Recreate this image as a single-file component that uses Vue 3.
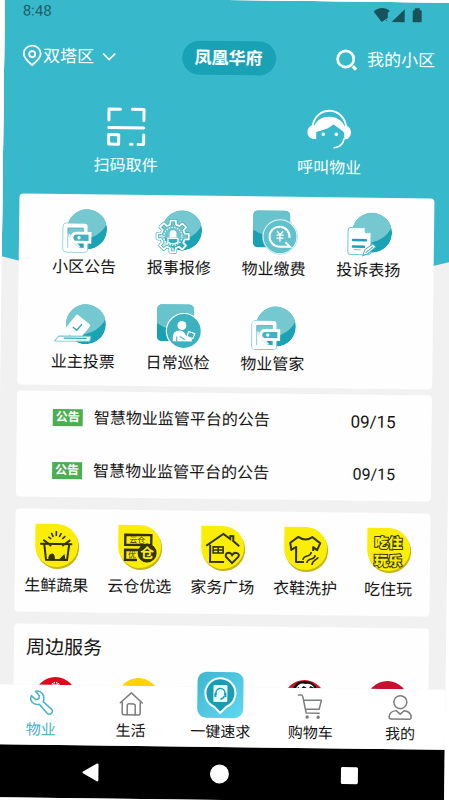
<script setup>
import { ref } from 'vue'

const activeTab = ref('property')

const services = [
  { icon: 'wallet', label: '小区公告' },
  { icon: 'repair', label: '报事报修' },
  { icon: 'fee', label: '物业缴费' },
  { icon: 'feedback', label: '投诉表扬' },
  { icon: 'vote', label: '业主投票' },
  { icon: 'patrol', label: '日常巡检' },
  { icon: 'wallet', label: '物业管家' },
]

const notices = [
  { id: 1, title: '智慧物业监管平台的公告', date: '09/15' },
  { id: 2, title: '智慧物业监管平台的公告', date: '09/15' },
]

const shops = [
  { icon: 'fresh', label: '生鲜蔬果' },
  { icon: 'store', label: '云仓优选' },
  { icon: 'home', label: '家务广场' },
  { icon: 'wash', label: '衣鞋洗护' },
  { icon: 'fun', label: '吃住玩' },
]

const nearby = ['#dd0a1c', '#ffd400', '#38b9cb', '#c8142c', '#c8102e']

const tabs = [
  { id: 'property', label: '物业' },
  { id: 'life', label: '生活' },
  { id: 'call', label: '一键速求' },
  { id: 'cart', label: '购物车' },
  { id: 'mine', label: '我的' },
]

// Outline of an eight-toothed gear around (cx, cy)
function gearPoints(cx, cy, inner, outer) {
  const points = []
  for (let i = 0; i < 8; i++) {
    const mid = (i * Math.PI) / 4
    const corners = [[-0.24, inner], [-0.17, outer], [0.17, outer], [0.24, inner]]
    for (const [offset, r] of corners) {
      points.push(`${(cx + r * Math.sin(mid + offset)).toFixed(1)},${(cy - r * Math.cos(mid + offset)).toFixed(1)}`)
    }
  }
  return points.join(' ')
}

const gear = gearPoints(17, 27, 12, 16)
</script>

<template>
  <div class="phone">
    <svg class="defs" width="0" height="0" aria-hidden="true">
      <defs>
        <clipPath id="ball"><circle cx="26" cy="21" r="20" /></clipPath>
        <clipPath id="tile"><rect x="2" y="0" width="37" height="37" rx="5" /></clipPath>
        <linearGradient id="sos" x1="0" y1="0" x2="1" y2="1">
          <stop offset="0" stop-color="#3fb6cf" />
          <stop offset="1" stop-color="#5fd8f3" />
        </linearGradient>
      </defs>
    </svg>

    <main class="content">
      <header class="hero">
        <div class="status">
          <span>8:48</span>
          <svg class="status-icons" viewBox="0 0 50 16" fill="#17535d">
            <path d="M0 5C4 0 12 0 16 4L14 6V11L8 15Z" />
            <path d="M13 7V11M13 13V14" stroke="#17535d" stroke-width="1" />
            <path d="M18 15L31 2V15Z" />
            <path d="M39 4Q39 3 40 3H41V1H46V3H47Q48 3 48 4V14Q48 15 47 15H40Q39 15 39 14Z" />
          </svg>
        </div>

        <div class="topbar">
          <button class="area" type="button">
            <svg class="pin" viewBox="0 0 20 22" fill="none" stroke="#fff" stroke-width="1.8">
              <path d="M10 20.500C6 17 1.500 13.500 1.500 9A8.500 8 0 0 1 18.500 9C18.500 13.500 14 17 10 20.500Z" />
              <circle cx="10" cy="9.500" r="3" />
            </svg>
            双塔区
            <svg class="chevron" viewBox="0 0 14 8" fill="none" stroke="#fff" stroke-width="1.6">
              <path d="M1 1L7 7L13 1" />
            </svg>
          </button>
          <button class="estate" type="button">凤凰华府</button>
          <button class="mine" type="button">
            <svg class="search" viewBox="0 0 22 22" fill="none" stroke="#fff" stroke-width="2.800">
              <circle cx="10" cy="10" r="8.500" />
              <path d="M17.500 17.500L21 21" stroke-width="3.400" />
            </svg>
            我的小区
          </button>
        </div>

        <nav class="quick">
          <a class="quick-item" href="#scan">
            <svg class="quick-icon" viewBox="0 0 44 40" fill="none" stroke="#fff" stroke-width="3" stroke-linecap="round" stroke-linejoin="round">
              <path d="M4.500 13.500V2.500H16M28 2.500H39.500V13.500M4.500 21H39.500M39.500 28V37.500H34" />
              <rect x="4.500" y="28" width="10" height="9.500" />
              <path d="M26.500 37.500H28" />
            </svg>
            扫码取件
          </a>
          <a class="quick-item" href="#call">
            <svg class="quick-icon" viewBox="0 0 44 40" fill="#fff">
              <path d="M5 18C8 -4 36 -4 39 18" fill="none" stroke="#fff" stroke-width="1.800" />
              <path d="M6 21C7 3 37 3 38 21V25C36 21 31 19 26 15C21 20 15 21 9 23V30H6Z" />
              <path d="M7 16C-2 16-2 30 7 30ZM37 16C46 16 46 30 37 30Z" />
              <circle cx="16" cy="25" r="1.800" />
              <circle cx="29" cy="25" r="1.800" />
              <path d="M37 29C36 35 32 38 27 38.500" fill="none" stroke="#fff" stroke-width="1.600" stroke-linecap="round" />
            </svg>
            呼叫物业
          </a>
        </nav>
      </header>

      <section class="card services">
        <a v-for="item in services" :key="item.label" class="service" href="#service">
          <svg class="service-icon" viewBox="0 0 46 44">
            <g v-if="item.icon === 'fee' || item.icon === 'patrol'" clip-path="url(#tile)">
              <rect x="2" width="37" height="37" fill="#1b9fb3" />
              <ellipse cx="25" cy="4" rx="31" ry="22" fill="#68c3cd" />
            </g>
            <g v-else clip-path="url(#ball)">
              <circle cx="26" cy="21" r="20" fill="#1aa2b5" />
              <circle cx="21" cy="4" r="27" fill="#75c8d0" />
            </g>

            <g v-if="item.icon === 'wallet'" fill="none">
              <rect x="2" y="15" width="25" height="29" rx="4" stroke="#7accd4" stroke-width="1" />
              <rect x="4.500" y="17.500" width="20" height="24" rx="1" stroke="#fff" stroke-width="4" />
              <path d="M7 39.500V20H22.500V24M22.500 35V39.500Z" stroke="#58bbc7" stroke-width=".8" />
              <path d="M7.500 25L20 39H7.500Z" fill="#fff" opacity=".85" />
              <path d="M29 25H16Q11 25 11 29.500T16 34H29Z" fill="#42b0bf" stroke="#fff" stroke-width="2.800" />
              <circle cx="18" cy="29.500" r="1.700" fill="#fff" />
            </g>

            <g v-else-if="item.icon === 'repair'" fill="none" stroke-linejoin="round">
              <polygon :points="gear" fill="#62bfc9" fill-opacity=".4" stroke="#35aaba" stroke-width="3" />
              <polygon :points="gear" stroke="#fff" stroke-width="1.800" />
              <circle cx="17" cy="27" r="9" stroke="#fff" stroke-width="1.200" stroke-dasharray="1.500 1.200" />
              <path d="M13.500 25Q13.500 21 17 21T20.500 25V28H13.500Z" fill="#fff" />
              <path d="M12 29H22V33Q17 36 12 33Z" stroke="#fff" stroke-width="1.400" fill="#35aaba" />
            </g>

            <g v-else-if="item.icon === 'fee'" fill="none">
              <circle cx="29" cy="26" r="17" fill="#62c1cb" stroke="#fff" stroke-width="1" />
              <circle cx="29" cy="26" r="17.500" stroke="#8ad2d9" stroke-width=".6" />
              <path d="M38.500 27A10 10 0 1 0 29 36H39L34.500 31.500" stroke="#fff" stroke-width="2" />
              <path d="M26 20.500L29 24L32 20.500M29 24V31M25.500 24.500H32.500M25.500 27.500H32.500" stroke="#fff" stroke-width="1.300" />
            </g>

            <g v-else-if="item.icon === 'feedback'">
              <path d="M5 16H18L25 22V40Q25 43 22 43H5Q2 43 2 40V19Q2 16 5 16Z" fill="#fff" stroke="#72c8d1" />
              <path d="M18 16V20Q18 22 20 22H25" fill="#7bcbd3" stroke="#fff" />
              <path d="M7 28.500H20M7 35H18" stroke="#1aa2b5" stroke-width="2.400" stroke-linecap="round" />
              <path d="M8 38H15" stroke="#72c8d1" />
              <path d="M17 44L19 38L27 32L30 35L22 42Z" fill="#fff" stroke="#49b4c1" />
              <path d="M20 41L27 35" stroke="#49b4c1" />
            </g>

            <g v-else-if="item.icon === 'vote'">
              <rect x="8.500" y="14" width="18" height="21" rx="2" transform="rotate(38 17.500 24.500)" fill="#fff" />
              <path d="M13 24L17 27L22 21" fill="none" stroke="#35aaba" stroke-width="1.400" />
              <path d="M-1 33H31L30 38H-5Z" fill="#fff" stroke="#72c8d1" stroke-linejoin="round" />
              <path d="M4 35H27" stroke="#35aaba" stroke-width="1.200" />
            </g>

            <g v-else>
              <circle cx="29" cy="26.500" r="17.500" fill="#3cb2c1" stroke="#fff" stroke-width="1.200" />
              <circle cx="27" cy="21" r="4.500" fill="#fff" />
              <path d="M18 37V33Q18 26 25 26Q29 26 31 31L37 34V37Z" fill="#fff" />
              <path d="M22 32V37M25 32L30 35" stroke="#3cb2c1" stroke-width="1" />
              <path d="M34 27L40 29L38 34L32 32Z" fill="none" stroke="#fff" stroke-width="1.200" />
            </g>
          </svg>
          {{ item.label }}
        </a>
      </section>

      <section class="card notices">
        <a v-for="notice in notices" :key="notice.id" class="notice" href="#notice">
          <span class="tag">公告</span>
          <span class="notice-title">{{ notice.title }}</span>
          <time class="date">{{ notice.date }}</time>
        </a>
      </section>

      <section class="card shops">
        <a v-for="shop in shops" :key="shop.label" class="shop" href="#shop">
          <svg class="shop-icon" viewBox="0 0 45 45">
            <path d="M2 2H23A21.500 21.500 0 1 1 2 24Z" fill="#c5b41c" />
            <path d="M1 0H22A21.500 21.500 0 1 1 1 22Z" fill="#fbee06" />

            <g v-if="shop.icon === 'fresh'" fill="none" stroke="#33310f" stroke-width="2">
              <path d="M10 20L12 36H33L35 20" />
              <path d="M6 20H38M9 16L17 22M36 16L28 22" />
              <path d="M14 13L17 15M17 9L19 13M22 7V12M27 9L25 13M31 12L28 15" stroke-width="1.600" />
              <path d="M15 36Q14 31 18 30Q21 31 20 36ZM25 36L30 31L31 36Z" fill="#33310f" stroke-width="1" />
            </g>

            <g v-else-if="shop.icon === 'store'">
              <path d="M8 10H34V20H8ZM22 25H8V35H20" fill="none" stroke="#33310f" stroke-width="2.400" />
              <text x="12" y="18" class="store-small">云仓</text>
              <text x="11" y="33" class="store-small">优</text>
              <circle cx="30" cy="28" r="9.500" fill="#33310f" />
              <text x="30" y="33" class="store-mark">仓</text>
            </g>

            <g v-else-if="shop.icon === 'home'" fill="none" stroke="#33310f" stroke-width="2">
              <path d="M6 20L23 8L30 13V10H33V15L39 20M10 19V36H24" />
              <path d="M13 21H23V27H13ZM18 21V27M13 24H23" stroke-width="1.600" />
              <path d="M32 37L26 31C24 27 30 25 32 29C34 25 41 27 38 31Z" />
            </g>

            <g v-else-if="shop.icon === 'wash'" fill="none" stroke="#33310f" stroke-width="2" stroke-linejoin="round">
              <path d="M21 35H13V20L8 23V22L7 16L15 10Q22 15 29 10L37 16L34 23L30 20V24" />
              <path d="M20 33Q20 30 24 29T28 25M24 36Q24 33 28 32T32 28M29 38Q29 35 32 33T35 30" stroke-width="1.600" />
            </g>

            <g v-else>
              <text x="22" y="20" class="fun-mark">吃住</text>
              <text x="22" y="38" class="fun-mark">玩乐</text>
            </g>
          </svg>
          {{ shop.label }}
        </a>
      </section>

      <section class="card nearby">
        <h2>周边服务</h2>
        <div class="brands">
          <svg v-for="(color, i) in nearby" :key="i" class="brand" viewBox="0 0 42 42">
            <circle cx="21" cy="21" r="21" :fill="color" />
            <path v-if="i === 0" d="M18 6L17 10M20 5L19 8H23L22 5M24 6L25 10" fill="none" stroke="#fff" stroke-width="1" />
            <g v-if="i === 3">
              <path d="M9 9Q12 1 21 1T34 9L30 14H12Z" fill="#111" />
              <path d="M12 9Q16 2 22 4Q28 3 31 8L27 6L25 9L20 6L17 9L15 7Z" fill="#fff" />
            </g>
          </svg>
        </div>
      </section>
    </main>

    <nav class="tabbar">
      <button
        v-for="tab in tabs"
        :key="tab.id"
        type="button"
        class="tab"
        :class="{ active: tab.id === activeTab }"
        @click="activeTab = tab.id"
      >
        <svg v-if="tab.id === 'call'" class="call-icon" viewBox="0 0 46 46">
          <rect width="46" height="46" rx="9" fill="url(#sos)" />
          <path d="M23 41L17 35A15 15 0 1 1 29 35Z" fill="#1a9db4" stroke="#fff" stroke-width="2" stroke-linejoin="round" />
          <rect x="16" y="13" width="14" height="17" rx="1" fill="#e9fbfe" />
          <path d="M18.500 23V21A4.500 4.500 0 0 1 27.500 21V23M27 24Q26 27 23 27" fill="none" stroke="#1a9db4" stroke-width="1.400" />
          <path d="M18 21V25M28 21V25" stroke="#1a9db4" stroke-width="2" />
        </svg>
        <svg v-else class="tab-icon" viewBox="0 0 26 26" fill="none" stroke="currentColor" stroke-width="1.500" stroke-linejoin="round" stroke-linecap="round">
          <path v-if="tab.id === 'property'" d="M7 1.500L11 6L10.500 9L7.500 10L3 6C1 11 5 16 11 14.500L19 23.500C22 26 26 22 23.500 19.500L15 12C17 6 13 0 7 1.500Z" />
          <g v-else-if="tab.id === 'life'">
            <path d="M2 12L13 2L24 12M4 11V22Q4 24 6 24H20Q22 24 22 22V11" />
            <path d="M9 24V15Q9 13 11 13H15Q17 13 17 15V24" />
          </g>
          <g v-else-if="tab.id === 'cart'">
            <path d="M1 2H4Q5 2 5.500 4L9 20H22M6 7H24L22 16H8" />
            <circle cx="10" cy="24" r="1" fill="currentColor" />
            <circle cx="21" cy="24" r="1" fill="currentColor" />
          </g>
          <g v-else>
            <circle cx="13" cy="8" r="6.500" />
            <path d="M9 16.500L13 20L17 16.500C21 17 24 19 24 23Q24 25 22 25H4Q2 25 2 23C2 19 5 17 9 16.500Z" />
          </g>
        </svg>
        {{ tab.label }}
      </button>
    </nav>

    <footer class="sysnav">
      <button type="button" aria-label="返回">
        <svg viewBox="0 0 20 20" fill="#fff" stroke="#fff" stroke-width="2" stroke-linejoin="round"><path d="M3 10L17 2V18Z" /></svg>
      </button>
      <button type="button" aria-label="主页">
        <svg viewBox="0 0 20 20" fill="#fff"><circle cx="10" cy="10" r="9.500" /></svg>
      </button>
      <button type="button" aria-label="最近任务">
        <svg viewBox="0 0 20 20" fill="#fff"><rect x="1.500" y="1.500" width="17" height="17" rx="1.500" /></svg>
      </button>
    </footer>
  </div>
</template>

<style>
body {
  background: #fff;
  overflow: hidden;
}
</style>

<style scoped>
/* The whole screen leans slightly clockwise */
.phone {
  display: flex;
  flex-direction: column;
  height: 100vh;
  overflow: hidden;
  background: #f1f1f1;
  color: #141414;
  font-family: Roboto, 'Noto Sans CJK SC', sans-serif;
  font-size: 16px;
  line-height: 24px;
  transform: rotate(0.7deg);
}

.phone *,
.phone *::before {
  box-sizing: border-box;
}

.defs {
  position: absolute;
}

button {
  border: 0;
  padding: 0;
  background: none;
  color: inherit;
  font: inherit;
  cursor: pointer;
}

a {
  color: inherit;
  text-decoration: none;
}

svg {
  display: block;
  flex-shrink: 0;
  overflow: visible;
}

.content {
  flex: 1;
  min-height: 0;
  overflow-y: auto;
  scrollbar-width: none;
}

.hero {
  padding-bottom: 91px;
  background: #38b9cb;
  color: #fff;
  clip-path: polygon(0 0, 100% 0, 100% calc(100% - 11px), 90% 100%, 10% 100%, 0 calc(100% - 11px));
}

.status {
  display: flex;
  align-items: center;
  justify-content: space-between;
  padding: 1px 30px 0 18px;
  color: #1f5d67;
  font-size: 15px;
}

.status-icons {
  width: 50px;
  height: 16px;
}

.topbar {
  display: grid;
  grid-template-columns: 1fr auto 1fr;
  align-items: center;
  margin-top: 16px;
  padding: 0 18px;
  font-size: 17px;
}

.area,
.mine {
  display: flex;
  align-items: center;
  white-space: nowrap;
}

.mine {
  justify-self: end;
  gap: 10px;
}

.pin {
  width: 20px;
  height: 22px;
  margin-right: 1px;
}

.chevron {
  width: 14px;
  height: 8px;
  margin-left: 8px;
}

.search {
  width: 21px;
  height: 21px;
}

.estate {
  height: 34px;
  padding: 0 13px;
  border-radius: 17px;
  background: #19a2b6;
  font-weight: 700;
}

.quick {
  display: grid;
  grid-template-columns: 1fr 1fr;
  padding: 33px 21px 0;
}

.quick-item {
  display: flex;
  flex-direction: column;
  align-items: center;
  gap: 7px;
}

.quick-icon {
  width: 44px;
  height: 40px;
}

.card {
  margin: 12px 17px 0;
  border-radius: 4px;
  background: #fefefe;
}

.services {
  position: relative;
  display: grid;
  grid-template-columns: repeat(4, 1fr);
  row-gap: 24px;
  margin-top: -74px;
  padding: 14px 18px 11px;
}

.service {
  display: flex;
  flex-direction: column;
  align-items: center;
  gap: 3px;
}

.service-icon {
  width: 46px;
  height: 44px;
}

.notices {
  margin-top: 6px;
}

.notice {
  display: flex;
  align-items: center;
  height: 53px;
  padding: 0 36px;
}

.tag {
  padding: 0 3px;
  background: #4bae51;
  color: #fff;
  font-size: 12px;
  font-weight: 700;
  line-height: 17px;
}

.notice-title {
  flex: 1;
  margin-left: 11px;
}

.notice:first-child .date {
  font-size: 17px;
}

.shops {
  display: grid;
  grid-template-columns: repeat(5, 1fr);
  padding: 15px 0 14px;
}

.shop {
  display: flex;
  flex-direction: column;
  align-items: center;
  gap: 5px;
}

.shop-icon {
  width: 45px;
  height: 45px;
}

.store-small {
  fill: #33310f;
  font-size: 8px;
}

.store-mark {
  fill: #fbee06;
  font-size: 14px;
  font-weight: 700;
  text-anchor: middle;
}

.fun-mark {
  fill: #fbee06;
  stroke: #33310f;
  stroke-width: 2px;
  paint-order: stroke;
  font-size: 14px;
  font-weight: 900;
  text-anchor: middle;
}

.nearby h2 {
  margin: 0;
  padding: 12px 12px 0;
  font-size: 19px;
  font-weight: 400;
}

.brands {
  display: grid;
  grid-template-columns: repeat(5, 1fr);
  justify-items: center;
  padding: 17px 0;
}

.brand {
  width: 42px;
  height: 42px;
}

.tabbar {
  position: relative;
  display: grid;
  grid-template-columns: repeat(5, 1fr);
  background: #fff;
}

.tab {
  display: flex;
  flex-direction: column;
  align-items: center;
  gap: 4px;
  padding: 5px 0;
  font-size: 15px;
  line-height: 20px;
}

.tab.active,
.tab.active .tab-icon {
  color: #43b3c6;
}

.tab-icon {
  width: 26px;
  height: 26px;
  color: #7d7d7d;
}

.call-icon {
  width: 46px;
  height: 46px;
  margin-top: -20px;
}

.sysnav {
  display: grid;
  grid-template-columns: repeat(3, 1fr);
  align-items: center;
  justify-items: center;
  height: 53px;
  padding: 0 30px;
  background: #000;
}

.sysnav svg {
  width: 20px;
  height: 20px;
}
</style>
